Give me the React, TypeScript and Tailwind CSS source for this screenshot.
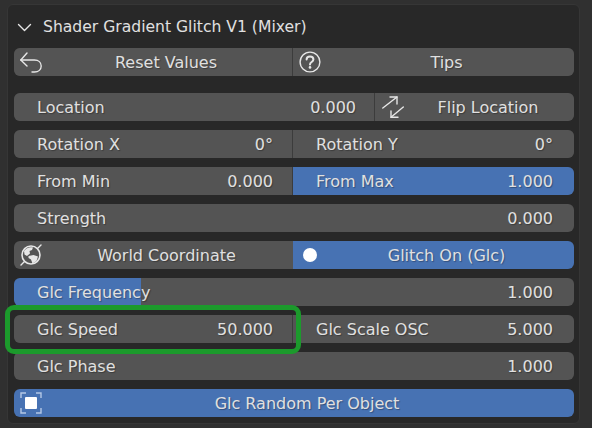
import React from 'react';

const rowBase = 'h-7 pt-[2px] flex items-center text-[#e0e0e0] [text-shadow:1px_1px_1px_rgba(0,0,0,0.3)]';

// Single Blender-style field: label on the left, value on the right
const Field = ({ label, value, active, className = 'pr-[21px]' }: { label: string; value: string; active?: boolean; className?: string }) => (
  <div className={`${rowBase} pl-[23px] justify-between ${active ? 'bg-[#4772b3]' : 'bg-[#545454]'} ${className}`}>
    <span>{label}</span>
    <span>{value}</span>
  </div>
);

const ResetIcon = () => (
  <svg width="22" height="22" viewBox="0 0 22 22" fill="none" stroke="#e6e6e6" strokeWidth="1.4" strokeLinecap="round" strokeLinejoin="round">
    <path d="M7 2 .8 9 7 15" />
    <path d="M.8 9H14.500c4 0 6.700 2.500 6.700 6s-2.700 6-6.700 6H12" />
  </svg>
);

const HelpIcon = () => (
  <svg width="22" height="22" viewBox="0 0 22 22" fill="none" stroke="#e6e6e6">
    <circle cx="11" cy="11" r="9.900" strokeWidth="1.400" />
    <path d="M7.600 8.600c0-2 1.500-3.200 3.400-3.200s3.400 1.200 3.400 3c0 2.600-3.400 2.600-3.400 5" strokeWidth="2" strokeLinecap="round" />
    <circle cx="11" cy="16.400" r="1.300" fill="#e6e6e6" stroke="none" />
  </svg>
);

const FlipIcon = () => (
  <svg width="22" height="22" viewBox="0 0 22 22" fill="none" stroke="#e6e6e6" strokeWidth="1.400" strokeLinecap="round" strokeLinejoin="round">
    <path d="M.8 12 15 1" />
    <path d="M8 1h7v7" />
    <path d="M21.300 11 9 21.300" />
    <path d="M16 21.300H9V15" />
  </svg>
);

const GlobeIcon = () => (
  <svg width="22" height="22" viewBox="0 0 22 22" fill="none">
    <circle cx="11" cy="11" r="9" stroke="#e6e6e6" strokeWidth="1.600" />
    <path d="M1 21l3-3M18 4l3-3" stroke="#e6e6e6" strokeWidth="1.400" strokeLinecap="round" />
    <path d="M4 7c2-3 6-4.500 9-3.500L12 6 9.500 7l.5 2.500L7 12 4.500 10.500z" fill="#e6e6e6" />
    <path d="M8.500 12l5-1 4.500 1.500-1.500 4.500-4 2.500-1.500-4-2.500-1.500z" fill="#e6e6e6" />
  </svg>
);

const CheckIcon = () => (
  <svg width="22" height="22" viewBox="0 0 22 22" fill="none">
    <path d="M1 6V1h5M16 1h5v5M21 16v5h-5M6 21H1v-5" stroke="#b4c8e6" strokeWidth="1.400" />
    <rect x="5" y="5" width="12" height="12" rx="1" fill="#ffffff" />
  </svg>
);

export default function App() {
  return (
    <div className="relative w-[592px] h-[428px] bg-[#303030] pt-1 pl-[7px] overflow-hidden font-['DejaVu_Sans',sans-serif] text-[16px]">
      <div className="w-[573px] h-[420px] bg-[#282828] border border-[#363636] rounded-md px-[6px]">
        <div className="h-[43px] pt-[2px] flex items-center gap-[11px] pl-[3px] text-[#e0e0e0] text-[15.6px]">
          <svg width="15" height="9" viewBox="0 0 15 9" fill="none" stroke="#e6e6e6" strokeWidth="1.400" strokeLinecap="round" strokeLinejoin="round">
            <path d="M1.500 1.500 7.500 7.500 13.500 1.500" />
          </svg>
          <span>Shader Gradient Glitch V1 (Mixer)</span>
        </div>

        <div className="w-[560px] flex flex-col">
          <div className="grid grid-cols-[278px_1fr] rounded-md overflow-hidden gap-px bg-[#3c3c3c]">
            <div className={`${rowBase} bg-[#545454] relative justify-center pl-[26px]`}>
              <span className="absolute left-[6px] top-[3px]"><ResetIcon /></span>
              <span>Reset Values</span>
            </div>
            <div className={`${rowBase} bg-[#545454] relative justify-center pl-[26px]`}>
              <span className="absolute left-[6px] top-[3px]"><HelpIcon /></span>
              <span>Tips</span>
            </div>
          </div>

          <div className="grid grid-cols-[360px_1fr] rounded-md overflow-hidden gap-px bg-[#3c3c3c] mt-[17px]">
            <Field label="Location" value="0.000" className="pr-[18px]" />
            <div className={`${rowBase} bg-[#545454] relative justify-center pl-[27px]`}>
              <span className="absolute left-[7px] top-[3px]"><FlipIcon /></span>
              <span>Flip Location</span>
            </div>
          </div>

          <div className="grid grid-cols-[278px_1fr] rounded-md overflow-hidden gap-px bg-[#3c3c3c] mt-[9px]">
            <Field label="Rotation X" value="0°" className="pr-[19px]" />
            <Field label="Rotation Y" value="0°" />
          </div>

          <div className="grid grid-cols-[278px_1fr] rounded-md overflow-hidden gap-px bg-[#3c3c3c] mt-[9px]">
            <Field label="From Min" value="0.000" className="pr-[19px]" />
            <Field label="From Max" value="1.000" active />
          </div>

          <Field label="Strength" value="0.000" className="pr-[21px] rounded-md mt-[9px]" />

          <div className="grid grid-cols-[279px_1fr] rounded-md overflow-hidden mt-[9px]">
            <div className={`${rowBase} bg-[#545454] relative justify-center pl-[26px]`}>
              <span className="absolute left-[6px] top-[3px]"><GlobeIcon /></span>
              <span>World Coordinate</span>
            </div>
            <div className={`${rowBase} bg-[#4772b3] relative justify-center pl-[26px]`}>
              <span className="absolute left-[10px] top-[7px] w-[14px] h-[14px] rounded-full bg-white" />
              <span>Glitch On (Glc)</span>
            </div>
          </div>

          <div className={`${rowBase} rounded-md pl-[23px] pr-[21px] justify-between mt-[9px] bg-[linear-gradient(to_right,#4772b3_127px,#545454_127px)]`}>
            <span>Glc Frequency</span>
            <span>1.000</span>
          </div>

          <div className="grid grid-cols-[278px_1fr] rounded-md overflow-hidden gap-px bg-[#3c3c3c] mt-[9px]">
            <Field label="Glc Speed" value="50.000" className="pr-[19px]" />
            <Field label="Glc Scale OSC" value="5.000" />
          </div>

          <Field label="Glc Phase" value="1.000" className="pr-[21px] rounded-md mt-[9px]" />

          <div className={`${rowBase} rounded-md bg-[#4772b3] relative justify-center pl-[26px] mt-[9px]`}>
            <span className="absolute left-[6px] top-[3px]"><CheckIcon /></span>
            <span>Glc Random Per Object</span>
          </div>
        </div>
      </div>

      {/* green annotation round the Glc Speed field */}
      <div className="absolute left-[5px] top-[305px] w-[296px] h-[49px] rounded-[9px] border-[5px] border-[#1c9a2c]" />
    </div>
  );
}
